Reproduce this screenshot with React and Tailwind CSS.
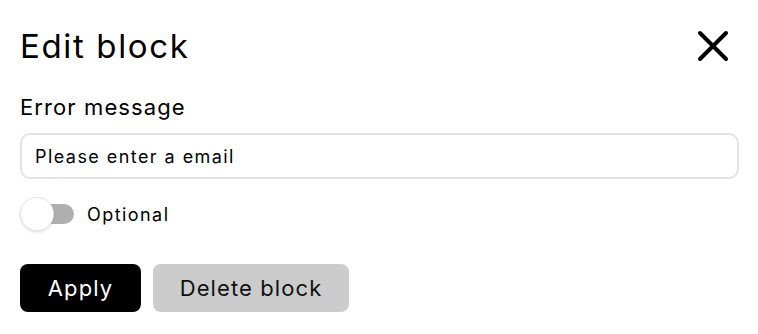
import React, { useState } from "react";

const EditBlock = () => {
  const [message, setMessage] = useState("Please enter a email");
  const [optional, setOptional] = useState(false);

  return (
    <div className="w-[758px] h-[334px] bg-white px-5 pt-[24px] font-['Inter',sans-serif] text-black">
      {/* Header */}
      <div className="flex items-center justify-between h-[44px] pr-[9px]">
        <h2 className="text-[33px] leading-[44px] font-normal tracking-[0.05em]">Edit block</h2>
        <button className="w-[32px] h-[32px] flex items-center justify-center">
          <svg width="32" height="32" viewBox="0 0 32 32" fill="none">
            <path d="M3 3 L29 29 M29 3 L3 29" stroke="black" strokeWidth="4" strokeLinecap="round" />
          </svg>
        </button>
      </div>

      {/* Field */}
      <label className="block mt-[25px] text-[22px] leading-[28px] tracking-[0.05em]">Error message</label>
      <input
        value={message}
        onChange={(e) => setMessage(e.target.value)}
        className="mt-[12px] w-[719px] h-[46px] px-[13px] rounded-[10px] border-2 border-[#e3e3e3] text-[18px] tracking-[0.08em] outline-none"
      />

      {/* Toggle */}
      <div className="flex items-center mt-[18px] h-[34px]">
        <button
          onClick={() => setOptional(!optional)}
          className="relative w-[55px] h-[34px] shrink-0"
        >
          <span className="absolute left-[10px] right-[1px] top-[7px] h-[20px] rounded-full bg-[#b0b0b0]" />
          <span className="absolute left-0 top-0 w-[34px] h-[34px] rounded-full bg-white border border-[#e8e8e8] shadow-[0_1px_3px_rgba(0,0,0,0.15)]" />
        </button>
        <span className="ml-[12px] text-[18px] tracking-[0.08em]">Optional</span>
      </div>

      {/* Actions */}
      <div className="flex gap-3 mt-[33px]">
        <button className="w-[121px] h-[48px] rounded-[8px] bg-black text-white text-[22px] tracking-[0.05em]">Apply</button>
        <button className="w-[196px] h-[48px] rounded-[8px] bg-[#cccccc] text-[#111] text-[22px] tracking-[0.05em]">Delete block</button>
      </div>
    </div>
  );
};

export default function App() {
  return <EditBlock />;
}
